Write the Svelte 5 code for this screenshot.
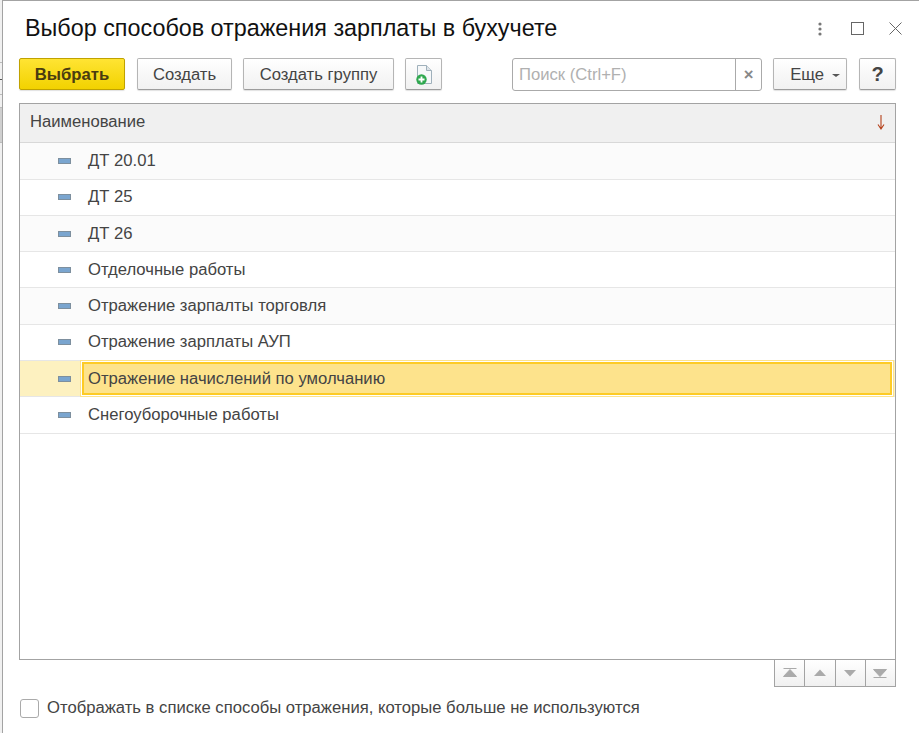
<script lang="ts">
  const rows = [
    'ДТ 20.01',
    'ДТ 25',
    'ДТ 26',
    'Отделочные работы',
    'Отражение зарпалты торговля',
    'Отражение зарплаты АУП',
    'Отражение начислений по умолчанию',
    'Снегоуборочные работы'
  ]
  const selected = 6
  // window behind the dialog, only a sliver of it shows on the left
  const behind = [
    { h: 63, cls: '' },
    { h: 17, cls: 'dark' },
    { h: 15, cls: '' },
    { h: 13, cls: '' },
    { h: 35, cls: 'shade' }
  ]
</script>

<div class="page">
  <div class="backdrop">
    {#each behind as seg}
      <div class="seg {seg.cls}" style="height: {seg.h}px"></div>
    {/each}
  </div>

  <div class="dialog">
    <header class="titlebar">
      <h1>Выбор способов отражения зарплаты в бухучете</h1>
      <div class="win-actions">
        <svg width="16" height="16" viewBox="0 0 16 16"><g fill="#777"><circle cx="8" cy="3" r="1.6" /><circle cx="8" cy="8" r="1.6" /><circle cx="8" cy="13" r="1.6" /></g></svg>
        <svg width="16" height="16" viewBox="0 0 16 16"><rect x="1.5" y="1.5" width="12" height="12" fill="none" stroke="#666" /></svg>
        <svg width="16" height="16" viewBox="0 0 16 16"><path d="M1.5 1.5 L13.5 13.5 M13.5 1.5 L1.5 13.5" stroke="#666" fill="none" /></svg>
      </div>
    </header>

    <div class="toolbar">
      <button class="btn primary">Выбрать</button>
      <button class="btn create">Создать</button>
      <button class="btn group">Создать группу</button>
      <button class="btn icon" aria-label="Создать копию">
        <svg width="20" height="22" viewBox="0 0 20 22">
          <path d="M3.5 2.5 H12.5 L17.5 7.5 V20.5 H3.5 Z" fill="#f6f8f9" stroke="#9fb0bb" />
          <path d="M12.5 2.5 V7.5 H17.5" fill="#dde3e8" stroke="#9fb0bb" />
          <circle cx="7.5" cy="16.5" r="5.2" fill="#2fa84f" />
          <path d="M7.5 13.5 V19.5 M4.5 16.5 H10.5" stroke="#fff" stroke-width="1.8" />
        </svg>
      </button>
      <div class="search">
        <span class="placeholder">Поиск (Ctrl+F)</span>
        <span class="clear">×</span>
      </div>
      <button class="btn more">Еще <span class="caret"></span></button>
      <button class="btn help">?</button>
    </div>

    <div class="table">
      <div class="thead">
        <span>Наименование</span>
        <svg width="10" height="18" viewBox="0 0 10 18"><path d="M5 2 V15 M2 11.5 L5 16 L8 11.5" fill="none" stroke="#b5401a" stroke-width="1.1" /></svg>
      </div>
      {#each rows as row, i}
        <div class="row" class:odd={i % 2 === 0} class:selected={i === selected}>
          <div class="marker"><span class="dash"></span></div>
          <div class="cell">{row}</div>
        </div>
      {/each}
    </div>

    <div class="pager">
      <button class="nav" aria-label="В начало">
        <svg width="14" height="10" viewBox="0 0 14 10"><path d="M0.5 0.5 H13.5 M7 1.5 L13.5 8.5 H0.5 Z" fill="#aaa" stroke="#aaa" stroke-width="1" /></svg>
      </button>
      <button class="nav" aria-label="Вверх">
        <svg width="14" height="10" viewBox="0 0 14 10"><path d="M7 1.5 L13 8 H1 Z" fill="#aaa" /></svg>
      </button>
      <button class="nav" aria-label="Вниз">
        <svg width="14" height="10" viewBox="0 0 14 10"><path d="M1 2 H13 L7 8.5 Z" fill="#aaa" /></svg>
      </button>
      <button class="nav" aria-label="В конец">
        <svg width="14" height="10" viewBox="0 0 14 10"><path d="M0.5 9.5 H13.5 M0.5 1.5 H13.5 L7 8.5 Z" fill="#aaa" stroke="#aaa" stroke-width="1" /></svg>
      </button>
    </div>

    <label class="check">
      <span class="box"></span>
      <span>Отображать в списке способы отражения, которые больше не используются</span>
    </label>
  </div>
</div>

<style>
  :global(body) {
    margin: 0;
    background: #fff;
  }

  .page {
    display: flex;
    width: 919px;
    height: 733px;
    overflow: hidden;
    font-family: "Liberation Sans", Arial, sans-serif;
    font-size: 16.65px;
    color: #444;
  }

  .backdrop {
    flex: 0 0 2px;
    background: #f0f0f0;
    border-right: 1px solid #a3a3a3;
  }

  .seg {
    box-sizing: border-box;
    border-bottom: 1px solid #bbb;
  }

  .seg.dark {
    border-bottom-color: #555;
  }

  .seg.shade {
    background: #cfcfcf;
  }

  .dialog {
    flex: 1;
    display: flex;
    flex-direction: column;
    padding: 0 23px 0 16px;
    border-top: 1px solid #a3a3a3;
    min-width: 0;
  }

  .titlebar {
    display: flex;
    align-items: center;
    justify-content: space-between;
    height: 57px;
    flex-shrink: 0;
  }

  h1 {
    margin: 0 0 2px 6px;
    font-size: 23.35px;
    font-weight: 400;
    color: #111;
    white-space: nowrap;
  }

  .win-actions {
    display: flex;
    gap: 22px;
    margin-right: -8px;
    margin-bottom: 2px;
  }

  .toolbar {
    display: flex;
    align-items: flex-start;
    height: 45px;
    flex-shrink: 0;
  }

  .btn {
    height: 32px;
    padding: 1px 0 0;
    border: 1px solid #b5b5b5;
    border-bottom-color: #9c9c9c;
    border-radius: 2px;
    background: linear-gradient(#fff, #f1f1f1);
    box-shadow: 0 1px 1px rgba(0, 0, 0, 0.12);
    font: inherit;
    color: #444;
    white-space: nowrap;
  }

  .primary {
    width: 106px;
    border-color: #c0a200;
    background: linear-gradient(#ffe433, #f2d200);
    font-weight: 700;
    color: #4a3c10;
  }

  .create {
    width: 95px;
    margin-left: 12px;
  }

  .group {
    width: 151px;
    margin-left: 11px;
  }

  .icon {
    width: 37px;
    margin-left: 11px;
    padding: 0;
    display: flex;
    align-items: center;
    justify-content: center;
  }

  .search {
    display: flex;
    align-items: center;
    width: 250px;
    height: 33px;
    margin-left: 70px;
    box-sizing: border-box;
    border: 1px solid #aaa;
    border-radius: 3px;
    background: #fff;
  }

  .placeholder {
    flex: 1;
    padding-left: 6px;
    color: #b0b0b0;
  }

  .clear {
    width: 26px;
    height: 31px;
    border-left: 1px solid #aaa;
    box-sizing: border-box;
    text-align: center;
    line-height: 31px;
    font-weight: 700;
    color: #888;
  }

  .more {
    width: 74px;
    margin-left: 11px;
    padding-left: 10px;
  }

  .caret {
    display: inline-block;
    margin-left: 3px;
    vertical-align: middle;
    border-left: 4px solid transparent;
    border-right: 4px solid transparent;
    border-top: 3px solid #555;
  }

  .help {
    width: 37px;
    margin-left: 12px;
    font-size: 20px;
    font-weight: 700;
  }

  .table {
    flex: 1;
    min-height: 0;
    border: 1px solid #a3a3a3;
    box-sizing: border-box;
  }

  .thead {
    display: flex;
    align-items: center;
    justify-content: space-between;
    height: 36.3px;
    padding: 0 9px 2px 10px;
    background: #f0f0f0;
    border-bottom: 1px solid #d8d8d8;
  }

  .row {
    display: flex;
    align-items: stretch;
    height: 35.3px;
    border-bottom: 1px solid #e6e6e6;
    background: #fff;
  }

  .row.odd {
    background: #fbfbfb;
  }

  .marker {
    flex: 0 0 62px;
    display: flex;
    align-items: center;
    justify-content: center;
    padding-left: 26px;
    box-sizing: border-box;
  }

  .dash {
    width: 13px;
    height: 6px;
    box-sizing: border-box;
    background: #7aa5cf;
    border: 1px solid #7d8f9e;
  }

  .cell {
    flex: 1;
    display: flex;
    align-items: center;
    padding-left: 6px;
  }

  .row.selected {
    background: #fdf1c0;
  }

  .row.selected .cell {
    background: #fde38c;
    border: 2px solid #fdcb26;
    box-shadow: 0 0 0 1px #fff, 0 0 0 2px #fde38c;
    margin: 1px 3px 1px 0;
    padding-left: 4px;
  }

  .pager {
    display: flex;
    justify-content: flex-end;
    height: 27px;
    flex-shrink: 0;
  }

  .nav {
    width: 31.25px;
    height: 27px;
    padding: 0;
    border: 1px solid #a3a3a3;
    border-top: 0;
    margin-left: -1px;
    background: linear-gradient(#fff, #f0f0f0);
    display: flex;
    align-items: center;
    justify-content: center;
  }

  .check {
    display: flex;
    align-items: center;
    gap: 8px;
    margin: 8px 0 12px 1px;
    height: 26px;
    flex-shrink: 0;
  }

  .box {
    width: 19px;
    height: 19px;
    box-sizing: border-box;
    border: 1px solid #aaa;
    border-radius: 3px;
    background: #fff;
  }
</style>
